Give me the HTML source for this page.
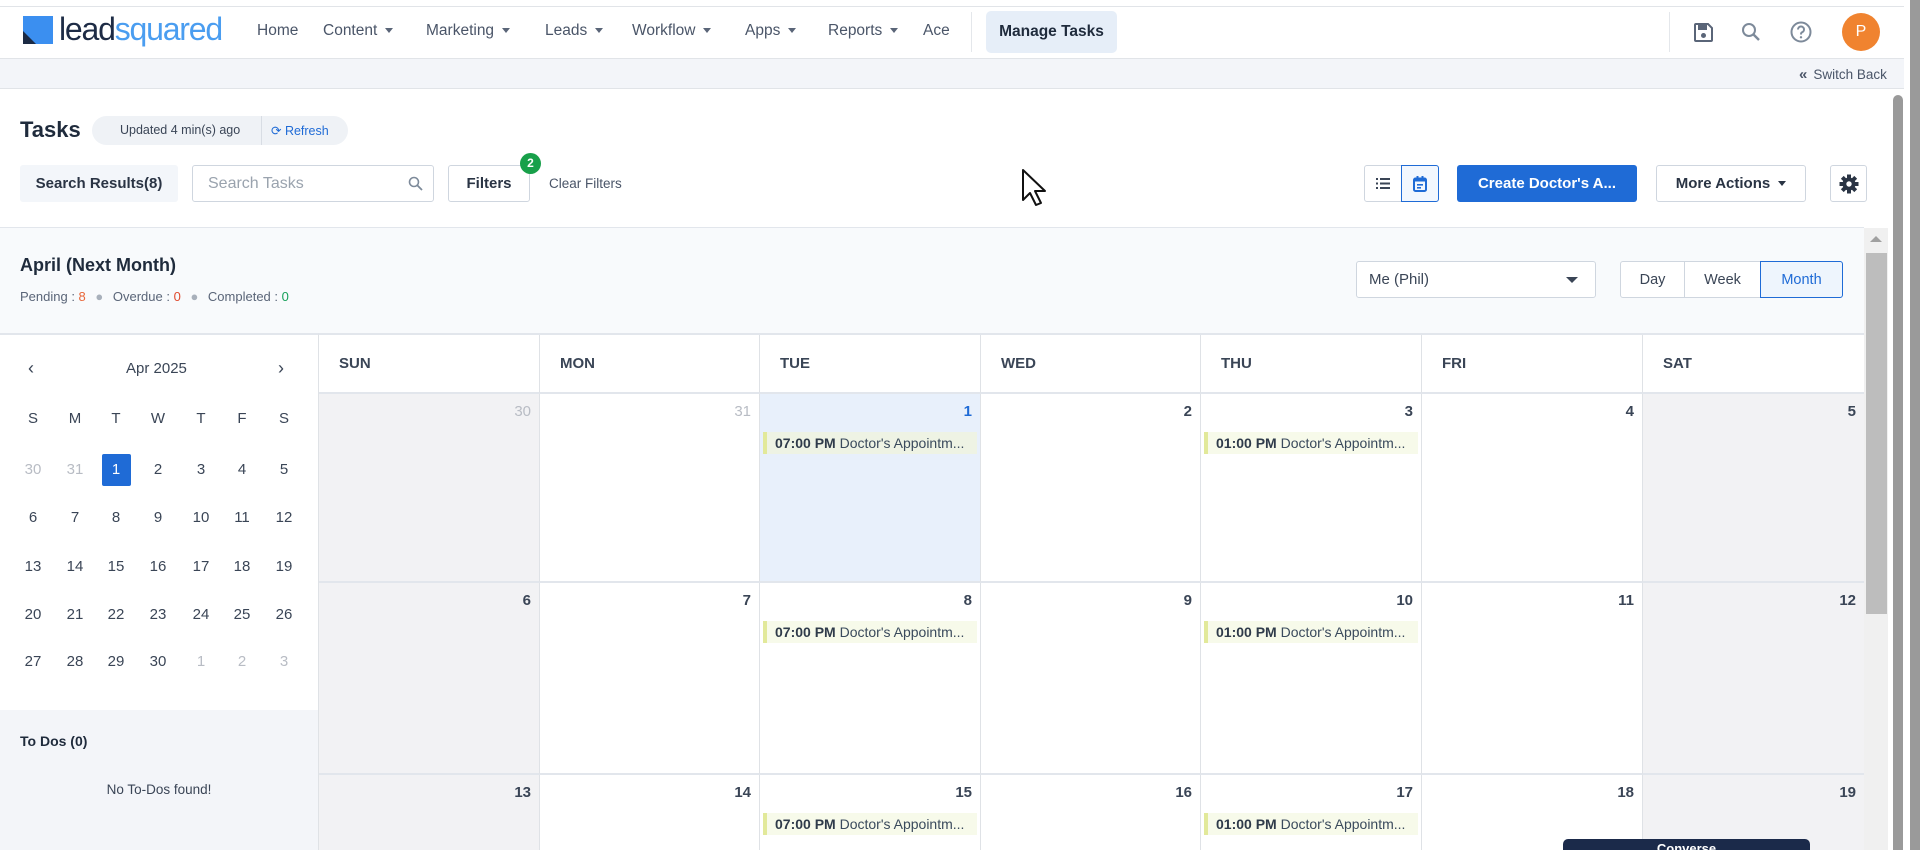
<!DOCTYPE html>
<html><head><meta charset="utf-8"><style>
*{box-sizing:border-box;margin:0;padding:0}
html{width:1920px;height:850px;overflow:hidden}
body{width:1920px;height:850px;overflow:hidden;background:#fff;font-family:"Liberation Sans",sans-serif;color:#2d3748;position:relative}
.a{position:absolute}
.nav{font-size:15.5px;color:#4a5568;top:22px}
.car{display:inline-block;width:0;height:0;border-left:4px solid transparent;border-right:4px solid transparent;border-top:5px solid #5a6578;margin-left:8px;vertical-align:middle}
.btn{border:1px solid #cfd6df;border-radius:3px;background:#fff;display:flex;align-items:center;justify-content:center}
.cal{position:absolute;left:318px;top:333px;width:1546px;height:517px;overflow:hidden;display:grid;grid-template-columns:221px 220px 221px 220px 221px 221px 222px;grid-template-rows:59px 189px 192px 77px;border-top:2px solid #e2e6ec}
.cal>div{border-right:1px solid #dfe2e6;border-bottom:2px solid #e2e6ec;position:relative}
.h{font-size:15px;font-weight:bold;color:#3a4556;padding:20px 0 0 20px}
.we{background:#f2f2f4}
.n{position:absolute;right:8px;top:9px;font-size:15px;font-weight:bold;color:#3a4556}
.g{color:#b8bcc4;font-weight:normal}
.ev{position:absolute;left:3px;top:38px;width:214px;height:22px;background:#f7faea;border-left:4px solid #e2e99a;font-size:14px;line-height:22px;padding-left:8px;color:#3a4a5c;white-space:nowrap;overflow:hidden}
.ev b{color:#2f3b4a}
.mc{position:absolute;font-size:15px;color:#3a4556;width:30px;text-align:center}
</style></head><body>
<div class="a" style="left:0;top:6px;width:1904px;height:1px;background:#e1e4e8"></div>
<div class="a" style="left:0;top:58px;width:1904px;height:1px;background:#e1e4e8"></div>
<div class="a" style="left:23px;top:16px;width:30px;height:28px;background:#3b8ff0"></div>
<div class="a" style="left:23px;top:31px;width:13px;height:13px;background:#1b2a44;clip-path:polygon(0 0,100% 100%,0 100%)"></div>
<div class="a" style="left:59px;top:11px;font-size:32px;letter-spacing:-1.2px"><span style="color:#1d2b45">lead</span><span style="color:#4a9df0">squared</span></div>
<div class="a nav" style="left:257px">Home</div>
<div class="a nav" style="left:323px">Content<span class="car"></span></div>
<div class="a nav" style="left:426px">Marketing<span class="car"></span></div>
<div class="a nav" style="left:545px">Leads<span class="car"></span></div>
<div class="a nav" style="left:632px">Workflow<span class="car"></span></div>
<div class="a nav" style="left:745px">Apps<span class="car"></span></div>
<div class="a nav" style="left:828px">Reports<span class="car"></span></div>
<div class="a nav" style="left:923px">Ace</div>
<div class="a" style="left:971px;top:12px;width:1px;height:40px;background:#e4e7eb"></div>
<div class="a" style="left:986px;top:11px;width:131px;height:42px;background:#e6eef8;border-radius:5px;font-size:15.5px;font-weight:bold;color:#1f2b3c;text-align:center;line-height:42px">Manage Tasks</div>
<div class="a" style="left:1669px;top:12px;width:1px;height:40px;background:#e4e7eb"></div>
<svg class="a" style="left:1694px;top:23px" width="19" height="19" viewBox="0 0 19 19"><path d="M2 1h12l4 4v12a1 1 0 0 1-1 1H2a1 1 0 0 1-1-1V2a1 1 0 0 1 1-1z" fill="none" stroke="#5a6578" stroke-width="2"/><rect x="4" y="2" width="9" height="5" fill="#5a6578"/><circle cx="9.5" cy="12.5" r="2.5" fill="#5a6578"/></svg>
<svg class="a" style="left:1741px;top:22px" width="20" height="20" viewBox="0 0 20 20"><circle cx="8" cy="8" r="6" fill="none" stroke="#7d8a9a" stroke-width="2"/><path d="M12.5 12.5L18 18" stroke="#7d8a9a" stroke-width="2.4"/></svg>
<svg class="a" style="left:1790px;top:21px" width="22" height="22" viewBox="0 0 22 22"><circle cx="11" cy="11" r="9.5" fill="none" stroke="#7d8a9a" stroke-width="2"/><path d="M8 8.5a3 3 0 1 1 4 2.8c-1 .4-1 1-1 2.2" fill="none" stroke="#7d8a9a" stroke-width="2"/><circle cx="11" cy="16.3" r="1.2" fill="#7d8a9a"/></svg>
<div class="a" style="left:1842px;top:13px;width:38px;height:38px;border-radius:50%;background:#f0832f;color:#fff;font-size:16px;text-align:center;line-height:38px">P</div>
<div class="a" style="left:0;top:59px;width:1904px;height:30px;background:#f3f5f9;border-bottom:1px solid #e1e4e8"></div>
<div class="a" style="left:1799px;top:66px;font-size:13.5px;color:#4a5568"><b style="font-size:15px;margin-right:6px">«</b>Switch Back</div>
<div class="a" style="left:1888px;top:89px;width:32px;height:761px;background:#fff"></div>
<div class="a" style="left:1893px;top:95px;width:10px;height:755px;background:#9a9a9a;border-radius:5px 5px 0 0"></div>
<div class="a" style="left:1910px;top:0;width:10px;height:850px;background:#9a9a9a"></div>
<div class="a" style="left:20px;top:117px;font-size:22px;font-weight:bold;color:#1f2b3c">Tasks</div>
<div class="a" style="left:92px;top:116px;width:256px;height:29px;background:#eff2f6;border-radius:15px"></div>
<div class="a" style="left:120px;top:123px;font-size:12.5px;color:#3a4556">Updated 4 min(s) ago</div>
<div class="a" style="left:261px;top:116px;width:1px;height:29px;background:#d8dde4"></div>
<div class="a" style="left:271px;top:123px;font-size:12.5px;color:#1f6bd6">⟳ Refresh</div>
<div class="a" style="left:20px;top:165px;width:158px;height:37px;background:#f3f6fa;border-radius:3px;font-size:15px;font-weight:bold;color:#2a3444;text-align:center;line-height:37px">Search Results(8)</div>
<div class="a btn" style="left:192px;top:165px;width:242px;height:37px;justify-content:flex-start;padding-left:15px;font-size:16px;color:#9aa3ae">Search Tasks</div>
<svg class="a" style="left:408px;top:176px" width="15" height="15" viewBox="0 0 15 15"><circle cx="6" cy="6" r="4.5" fill="none" stroke="#7d8a9a" stroke-width="1.6"/><path d="M9.5 9.5L14 14" stroke="#7d8a9a" stroke-width="1.8"/></svg>
<div class="a btn" style="left:448px;top:165px;width:82px;height:37px;font-size:15px;font-weight:bold;color:#2a3444">Filters</div>
<div class="a" style="left:520px;top:153px;width:21px;height:21px;border-radius:50%;background:#18a04a;color:#fff;font-size:12px;font-weight:bold;text-align:center;line-height:21px">2</div>
<div class="a" style="left:549px;top:176px;font-size:13.5px;color:#4a5568">Clear Filters</div>
<svg class="a" style="left:1021px;top:168px" width="26" height="42" viewBox="0 0 26 42"><path d="M2 2v30l7-7 6 12 5-2-6-12h10z" fill="#fff" stroke="#111" stroke-width="2" stroke-linejoin="round"/></svg>
<div class="a btn" style="left:1364px;top:165px;width:38px;height:37px;border-radius:3px 0 0 3px"><svg width="14" height="11" viewBox="0 0 14 11"><g fill="#3a4556"><rect x="0" y="0" width="2" height="2"/><rect x="4" y="0" width="10" height="2"/><rect x="0" y="4.5" width="2" height="2"/><rect x="4" y="4.5" width="10" height="2"/><rect x="0" y="9" width="2" height="2"/><rect x="4" y="9" width="10" height="2"/></g></svg></div>
<div class="a btn" style="left:1401px;top:165px;width:38px;height:37px;border-color:#1f6bd6;background:#f2f7fe;border-radius:0 3px 3px 0"><svg width="14" height="16" viewBox="0 0 14 16"><rect x="1" y="2.5" width="12" height="12.5" rx="1.5" fill="none" stroke="#1f6bd6" stroke-width="2"/><rect x="1" y="2.5" width="12" height="3" fill="#1f6bd6"/><rect x="3.5" y="0" width="2" height="3" fill="#1f6bd6"/><rect x="8.5" y="0" width="2" height="3" fill="#1f6bd6"/><rect x="4" y="8" width="6" height="1.6" fill="#1f6bd6"/><rect x="4" y="11" width="4" height="1.6" fill="#1f6bd6"/></svg></div>
<div class="a" style="left:1457px;top:165px;width:180px;height:37px;background:#1f6bd6;border-radius:3px;color:#fff;font-size:15px;font-weight:bold;text-align:center;line-height:37px">Create Doctor's A...</div>
<div class="a btn" style="left:1656px;top:165px;width:150px;height:37px;font-size:15px;font-weight:bold;color:#2a3444">More Actions<span class="car" style="border-top-color:#2a3444"></span></div>
<div class="a btn" style="left:1830px;top:165px;width:37px;height:37px"><svg width="20" height="20" viewBox="0 0 20 20"><g fill="#2a3444"><circle cx="10" cy="10" r="6.5"/><g id="t"><rect x="8" y="0.5" width="4" height="4"/><rect x="8" y="15.5" width="4" height="4"/></g><use href="#t" transform="rotate(45 10 10)"/><use href="#t" transform="rotate(90 10 10)"/><use href="#t" transform="rotate(135 10 10)"/></g><circle cx="10" cy="10" r="2.7" fill="#fff"/></svg></div>
<div class="a" style="left:0;top:227px;width:1864px;height:106px;background:#f8fafc;border-top:1px solid #e2e6ec"></div>
<div class="a" style="left:1864px;top:228px;width:24px;height:622px;background:#f0f0f0"></div>
<div class="a" style="left:1870px;top:236px;width:0;height:0;border-left:6px solid transparent;border-right:6px solid transparent;border-bottom:6px solid #a0a0a0"></div>
<div class="a" style="left:1866px;top:253px;width:21px;height:361px;background:#bdbdbd"></div>
<div class="a" style="left:20px;top:255px;font-size:18px;font-weight:bold;color:#1f2b3c">April (Next Month)</div>
<div class="a" style="left:20px;top:289px;font-size:13px;color:#5a6578">Pending : <span style="color:#e8673a">8</span> <span style="color:#a8b0bb;margin:0 6px">●</span> Overdue : <span style="color:#e04a2e">0</span> <span style="color:#a8b0bb;margin:0 6px">●</span> Completed : <span style="color:#17a05a">0</span></div>
<div class="a btn" style="left:1356px;top:261px;width:240px;height:37px;justify-content:flex-start;padding-left:12px;font-size:15px;color:#3a4556">Me (Phil)</div>
<div class="a" style="left:1566px;top:277px;border-left:6px solid transparent;border-right:6px solid transparent;border-top:6px solid #3a4556"></div>
<div class="a btn" style="left:1620px;top:261px;width:65px;height:37px;font-size:14.5px;color:#3a4556;border-radius:3px 0 0 3px">Day</div>
<div class="a btn" style="left:1684px;top:261px;width:77px;height:37px;font-size:14.5px;color:#3a4556;border-radius:0">Week</div>
<div class="a btn" style="left:1760px;top:261px;width:83px;height:37px;font-size:14.5px;color:#1f6bd6;border-color:#1f6bd6;background:#eef5fd;border-radius:0 3px 3px 0">Month</div>
<div class="a" style="left:0;top:333px;width:318px;height:517px;background:#fff;border-top:2px solid #e2e6ec"></div>
<div class="a" style="left:0;top:710px;width:318px;height:140px;background:#f3f5f9"></div>
<div class="a" style="left:28px;top:358px;font-size:18px;color:#3a4556">‹</div>
<div class="a" style="left:278px;top:358px;font-size:18px;color:#3a4556">›</div>
<div class="a" style="left:126px;top:360px;font-size:15px;color:#3a4556">Apr 2025</div>
<div class="a" style="left:102px;top:454px;width:29px;height:32px;background:#1f6bd6;border-radius:2px"></div>
<div class="a" style="left:20px;top:733px;font-size:14px;font-weight:bold;color:#1f2b3c">To Dos (0)</div>
<div class="a" style="left:0;top:782px;width:318px;text-align:center;font-size:13.5px;color:#3a4556">No To-Dos found!</div>
<div class="mc" style="left:18px;top:410px">S</div><div class="mc" style="left:60px;top:410px">M</div><div class="mc" style="left:101px;top:410px">T</div><div class="mc" style="left:143px;top:410px">W</div><div class="mc" style="left:186px;top:410px">T</div><div class="mc" style="left:227px;top:410px">F</div><div class="mc" style="left:269px;top:410px">S</div>
<div class="mc" style="left:18px;top:461px;color:#b8bcc4">30</div><div class="mc" style="left:60px;top:461px;color:#b8bcc4">31</div><div class="mc" style="left:101px;top:461px;color:#fff">1</div><div class="mc" style="left:143px;top:461px">2</div><div class="mc" style="left:186px;top:461px">3</div><div class="mc" style="left:227px;top:461px">4</div><div class="mc" style="left:269px;top:461px">5</div>
<div class="mc" style="left:18px;top:509px">6</div><div class="mc" style="left:60px;top:509px">7</div><div class="mc" style="left:101px;top:509px">8</div><div class="mc" style="left:143px;top:509px">9</div><div class="mc" style="left:186px;top:509px">10</div><div class="mc" style="left:227px;top:509px">11</div><div class="mc" style="left:269px;top:509px">12</div>
<div class="mc" style="left:18px;top:558px">13</div><div class="mc" style="left:60px;top:558px">14</div><div class="mc" style="left:101px;top:558px">15</div><div class="mc" style="left:143px;top:558px">16</div><div class="mc" style="left:186px;top:558px">17</div><div class="mc" style="left:227px;top:558px">18</div><div class="mc" style="left:269px;top:558px">19</div>
<div class="mc" style="left:18px;top:606px">20</div><div class="mc" style="left:60px;top:606px">21</div><div class="mc" style="left:101px;top:606px">22</div><div class="mc" style="left:143px;top:606px">23</div><div class="mc" style="left:186px;top:606px">24</div><div class="mc" style="left:227px;top:606px">25</div><div class="mc" style="left:269px;top:606px">26</div>
<div class="mc" style="left:18px;top:653px">27</div><div class="mc" style="left:60px;top:653px">28</div><div class="mc" style="left:101px;top:653px">29</div><div class="mc" style="left:143px;top:653px">30</div><div class="mc" style="left:186px;top:653px;color:#b8bcc4">1</div><div class="mc" style="left:227px;top:653px;color:#b8bcc4">2</div><div class="mc" style="left:269px;top:653px;color:#b8bcc4">3</div>
<div class="cal" style="border-left:1px solid #dfe2e6">
<div class="h">SUN</div><div class="h">MON</div><div class="h">TUE</div><div class="h">WED</div><div class="h">THU</div><div class="h">FRI</div><div class="h">SAT</div>
<div class="we"><span class="n g">30</span></div>
<div><span class="n g">31</span></div>
<div style="background:#e8f0fb"><span class="n" style="color:#1f6bd6">1</span><div class="ev" style="background:#eef3e4"><b>07:00 PM</b> Doctor's Appointm...</div></div>
<div><span class="n">2</span></div>
<div><span class="n">3</span><div class="ev"><b>01:00 PM</b> Doctor's Appointm...</div></div>
<div><span class="n">4</span></div>
<div class="we"><span class="n">5</span></div>
<div class="we"><span class="n">6</span></div>
<div><span class="n">7</span></div>
<div><span class="n">8</span><div class="ev"><b>07:00 PM</b> Doctor's Appointm...</div></div>
<div><span class="n">9</span></div>
<div><span class="n">10</span><div class="ev"><b>01:00 PM</b> Doctor's Appointm...</div></div>
<div><span class="n">11</span></div>
<div class="we"><span class="n">12</span></div>
<div class="we" style="border-bottom:0"><span class="n">13</span></div>
<div style="border-bottom:0"><span class="n">14</span></div>
<div style="border-bottom:0"><span class="n">15</span><div class="ev"><b>07:00 PM</b> Doctor's Appointm...</div></div>
<div style="border-bottom:0"><span class="n">16</span></div>
<div style="border-bottom:0"><span class="n">17</span><div class="ev"><b>01:00 PM</b> Doctor's Appointm...</div></div>
<div style="border-bottom:0"><span class="n">18</span></div>
<div class="we" style="border-bottom:0"><span class="n">19</span></div>
</div>
<div class="a" style="left:1563px;top:839px;width:247px;height:11px;background:#1b2a4a;border-radius:5px 5px 0 0;color:#fff;font-size:13px;font-weight:bold;text-align:center;line-height:20px;overflow:hidden">Converse</div>
</body></html>
